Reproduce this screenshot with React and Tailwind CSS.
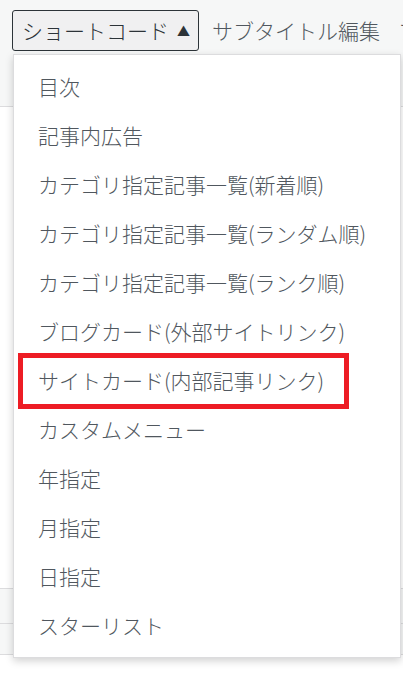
import React from "react";

const items = [
  "目次",
  "記事内広告",
  "カテゴリ指定記事一覧(新着順)",
  "カテゴリ指定記事一覧(ランダム順)",
  "カテゴリ指定記事一覧(ランク順)",
  "ブログカード(外部サイトリンク)",
  "サイトカード(内部記事リンク)",
  "カスタムメニュー",
  "年指定",
  "月指定",
  "日指定",
  "スターリスト",
];

export default function App() {
  return (
    <div
      className="relative w-[403px] h-[673px] overflow-hidden bg-white font-light"
      style={{ fontFamily: '"Noto Sans CJK JP", "Noto Sans", sans-serif' }}
    >
      <div className="h-[107px] bg-[#f6f7f7] border-b border-[#dcdcde]">
        <div className="flex items-center pt-[10px] pl-[12px] whitespace-nowrap">
          <button className="shrink-0 flex items-center h-[41px] w-[187px] pl-[9px] border border-[#2c3338] rounded-[3px] bg-[#f0f0f1] text-[21px] text-[#2c3338] leading-none font-light">
            <span>ショートコード</span>
            <span className="ml-[8px] text-[13px]">▲</span>
          </button>
          <span className="shrink-0 ml-[13px] text-[21px] text-[#50575e] leading-none">サブタイトル編集</span>
          <span className="shrink-0 ml-[18px] text-[21px] text-[#50575e] leading-none">フ</span>
        </div>
      </div>
      <div className="h-[481px]" />
      <div className="h-[35px] bg-[#f6f7f7] border-t border-[#dcdcde]" />
      <div className="h-[32px] bg-[#f6f7f7] border-t border-b border-[#dcdcde]" />

      <div className="absolute left-[13px] top-[54px] w-[388px] bg-white border border-[#dcdcde] shadow-[0_3px_8px_rgba(0,0,0,0.18)] py-[7px]">
        {items.map((t, i) => (
          <div key={i} className="relative h-[49px] flex items-center pl-[24px] text-[21px] text-[#50575e] whitespace-nowrap leading-none">
            {t}
          </div>
        ))}
      </div>
      <div className="absolute left-[18px] top-[353px] w-[331px] h-[56px] border-[5px] border-[#ed1c24]" />
    </div>
  );
}
